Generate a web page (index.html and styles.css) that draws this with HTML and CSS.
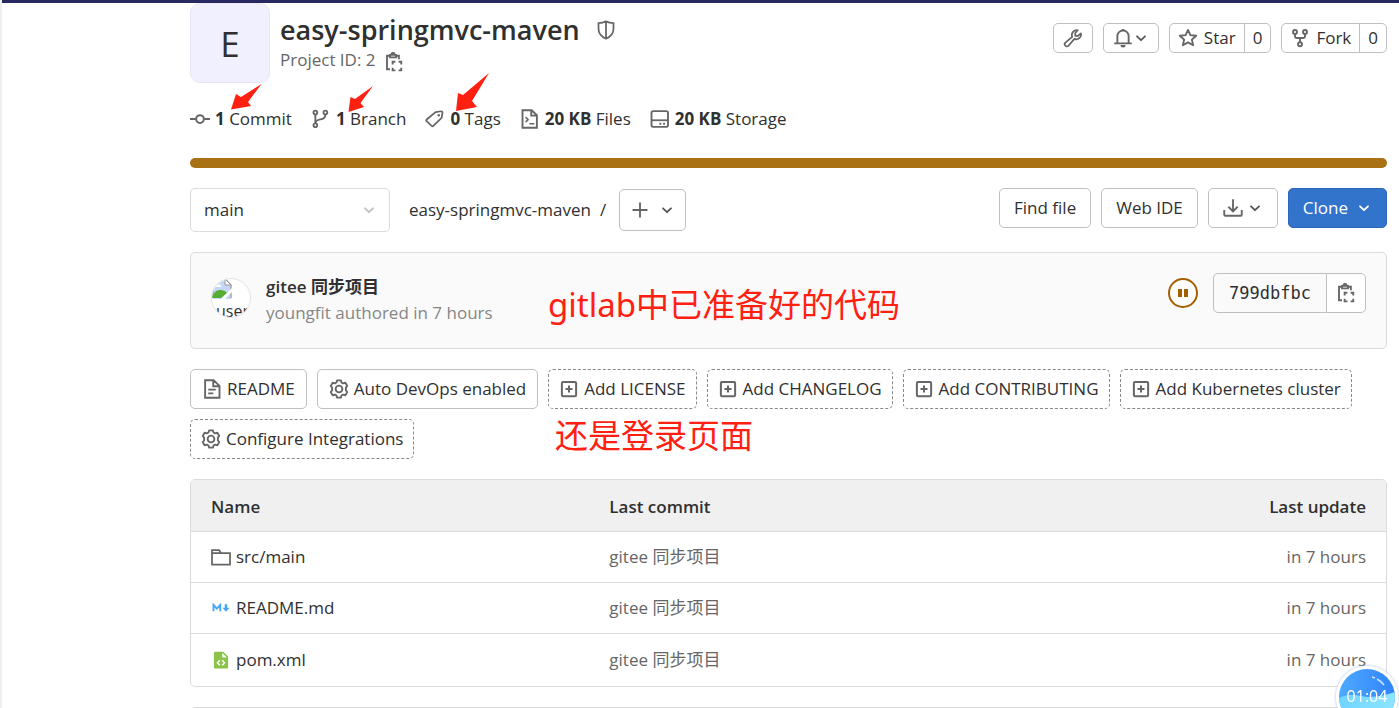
FILE: index.html
```html
<!DOCTYPE html>
<html lang="en">
<head>
<meta charset="utf-8">
<title>easy-springmvc-maven</title>
<link rel="stylesheet" href="styles.css">
</head>
<body>
<svg class="sprite" aria-hidden="true">
  <symbol id="chevron" viewBox="0 0 16 16"><path d="M4 6.3 8 10.2 12 6.3" fill="none" stroke="currentColor" stroke-width="1.8" stroke-linecap="round" stroke-linejoin="round"/></symbol>
  <symbol id="clipboard" viewBox="0 0 16 16"><g fill="none" stroke="currentColor" stroke-width="1.5"><path d="M4.800 3H2.400V13.800H4.800M9.600 3h2.300V5.800M4.800 2.300V4.300h4.800V2.300zM5.900 2a1.300 1.300 0 0 1 2.600 0"/><path d="M6.900 10V7.800H9.100M11.700 7.800h2.100V10M13.800 12.500v2.200h-2.100M9.100 14.700H6.900v-2.200"/></g></symbol>
  <symbol id="plus-square" viewBox="0 0 16 16"><g fill="none" stroke="currentColor" stroke-width="1.6"><rect x="2.300" y="2.300" width="11.400" height="11.400" rx="1"/><path d="M8 5.200v5.600M5.200 8h5.600"/></g></symbol>
  <symbol id="gear" viewBox="0 0 16 16"><g fill="none" stroke="currentColor" stroke-width="1.5" stroke-linejoin="round"><path d="M6.500 1.1h3l.5 1.700 1.300.7 1.800-.5 1.500 2.600-1.100 1.300v2.200l1.100 1.300-1.500 2.600-1.800-.5-1.300.7-.5 1.700h-3L6 13.200l-1.300-.7-1.800.5-1.500-2.600 1.100-1.300V6.900L1.400 5.600 2.900 3l1.800.5L6 2.800z"/><circle cx="8" cy="8" r="2.700"/></g></symbol>
</svg>

<div class="topbar"></div>
<main class="page">
  <header class="project">
    <div class="avatar">E</div>
    <div class="identity">
      <h1>easy-springmvc-maven
        <svg class="icon" viewBox="0 0 16 16"><path d="M8 1.100C10 2.100 12 2.400 14 2.400V7c0 4-2.200 6.300-6 8-3.800-1.700-6-4-6-8V2.400c2 0 4-.3 6-1.300zM8 1.500V15" fill="none" stroke="currentColor" stroke-width="1.400"/></svg>
      </h1>
      <div class="project-id">Project ID: 2
        <button class="plain" aria-label="Copy project ID"><svg class="icon"><use href="#clipboard"/></svg></button>
      </div>
    </div>
    <div class="actions">
      <button class="btn small" aria-label="Admin"><svg class="icon" viewBox="0 0 16 16"><path d="M14.300 4.300a3.800 3.800 0 0 1-5.200 4.400l-4.700 5.500a1.700 1.700 0 0 1-2.500-2.500l5.500-4.600A3.900 3.900 0 0 1 11.800 1.800L9.800 4v2.200H12z" fill="none" stroke="currentColor" stroke-width="1.400" stroke-linejoin="round"/></svg></button>
      <button class="btn small bell" aria-label="Notifications"><svg class="icon" viewBox="0 0 16 16"><path d="M3.500 12V6.500a4.500 4.500 0 0 1 9 0V12M1 12.300h14" fill="none" stroke="currentColor" stroke-width="1.500"/><path d="M6 13.500h4a2 2 0 0 1-4 0zM7 2V.8h2V2z" fill="currentColor"/></svg><svg class="chev"><use href="#chevron"/></svg></button>
      <div class="group"><button class="btn small"><svg class="icon" viewBox="0 0 16 16"><path d="M8 1.500l1.900 4.200 4.600.5-3.400 3.100 1 4.500L8 11.500l-4.100 2.300 1-4.500L1.500 6.200l4.600-.5z" fill="none" stroke="currentColor" stroke-width="1.500" stroke-linejoin="round"/></svg>Star</button><a class="btn small count" href="#">0</a></div>
      <div class="group"><button class="btn small"><svg class="icon" viewBox="0 0 16 16"><g fill="none" stroke="currentColor" stroke-width="1.500"><circle cx="4" cy="3.200" r="1.600"/><circle cx="12" cy="3.200" r="1.600"/><circle cx="8" cy="13" r="1.600"/><path d="M4 5v1.300q0 1.700 1.700 1.700h4.600q1.700 0 1.700-1.700V5M8 8v3.300"/></g></svg>Fork</button><a class="btn small count" href="#">0</a></div>
    </div>
  </header>

  <nav class="stats">
    <a href="#"><svg class="icon" viewBox="0 0 16 16"><path d="M0 8h4.500M11.500 8H16" stroke="currentColor" stroke-width="1.600"/><circle cx="8" cy="8" r="3.100" fill="none" stroke="currentColor" stroke-width="1.600"/></svg><span><b>1</b> Commit</span></a>
    <a href="#"><svg class="icon" viewBox="0 0 16 16"><g fill="none" stroke="currentColor" stroke-width="1.500"><circle cx="3.500" cy="2.800" r="1.500"/><circle cx="3.500" cy="13" r="1.500"/><circle cx="11.500" cy="2.800" r="1.500"/><path d="M3.500 4.500v7M11.500 4.500c0 3-2 3.500-4 3.800S3.500 9.500 3.500 11.500"/></g></svg><span><b>1</b> Branch</span></a>
    <a href="#"><svg class="icon" viewBox="0 0 16 16"><path d="M8.500 2.500 13 1.800q1 0 1 1L13.300 7 6.700 13.500q-.7.6-1.400 0L1.300 9.800q-.6-.7 0-1.400z" fill="none" stroke="currentColor" stroke-width="1.400"/><circle cx="11" cy="4.900" r="1" fill="currentColor"/></svg><span><b>0</b> Tags</span></a>
    <a href="#"><svg class="icon" viewBox="0 0 16 16"><g fill="none" stroke="currentColor" stroke-width="1.500"><path d="M2 1h7.300L13.500 5v10H2zM9 1v4.300h4.500"/><path d="M4.500 6.500 6.500 8.500 4.500 10.500M7.500 11.700h4" stroke-width="1.200"/></g></svg><span><b>20 KB</b> Files</span></a>
    <a href="#"><svg class="icon" viewBox="0 0 16 16"><rect x="1.200" y="1.700" width="13.200" height="12.600" rx="1.500" fill="none" stroke="currentColor" stroke-width="1.500"/><path d="M1 9h13.500" stroke="currentColor" stroke-width="1.400"/><path d="M7.500 11H9v1.500H7.500zM10.500 11H12v1.500h-1.500z" fill="currentColor"/></svg><span><b>20 KB</b> Storage</span></a>
  </nav>

  <div class="languages"></div>

  <div class="toolbar">
    <div class="ref"><select aria-label="Branch"><option>main</option></select><svg class="chev"><use href="#chevron"/></svg></div>
    <div class="crumbs"><a href="#">easy-springmvc-maven</a><span>/</span></div>
    <button class="btn add" aria-label="Add to tree"><svg class="icon" viewBox="0 0 16 16"><path d="M8 2v12M2 8h12" stroke="currentColor" stroke-width="1.500"/></svg><svg class="chev"><use href="#chevron"/></svg></button>
    <div class="right">
      <button class="btn">Find file</button>
      <button class="btn">Web IDE</button>
      <button class="btn download" aria-label="Download"><svg class="icon" viewBox="0 0 16 16"><path d="M8 1v9.500M4.300 7 8 10.700 11.700 7M1 9.500v3.800q0 .9.900.9h12.200q.9 0 .9-.9V9.500" fill="none" stroke="currentColor" stroke-width="1.500"/></svg><svg class="chev"><use href="#chevron"/></svg></button>
      <button class="btn primary">Clone<svg class="chev"><use href="#chevron"/></svg></button>
    </div>
  </div>

  <section class="commit">
    <div class="user">
      <svg viewBox="0 0 20 20" width="20" height="20"><path d="M1 0h12l6 6v14H1z" fill="#c5d7f8"/><path d="M1 18V0h12l6 6v13" fill="none" stroke="#a5a5a5" stroke-width="1.500"/><path d="M13 0v6h6z" fill="#fff" stroke="#999"/><path d="M3 8q0-3 3-2 2-2 3 1l1 1z" fill="#fff"/><path d="M0 19q2-8 8-8 5 0 7 3l-6 5z" fill="#56ad2f"/><path d="M9 20 20 9v4l-7 7z" fill="#fff"/></svg>
      <span>user</span>
    </div>
    <div class="message"><a href="#">gitee 同步项目</a><p>youngfit authored in 7 hours</p></div>
    <div class="right">
      <svg class="pause" viewBox="0 0 30 30" role="img" aria-label="Pending"><circle cx="15" cy="15" r="14" fill="#fff" stroke="#a35f00" stroke-width="2"/><path d="M10 11h4v8h-4zM16 11h4v8h-4z" fill="#a35f00"/></svg>
      <div class="group"><span class="btn sha">799dbfbc</span><button class="btn copy" aria-label="Copy commit SHA"><svg class="icon"><use href="#clipboard"/></svg></button></div>
    </div>
    <p class="note note-code">gitlab中已准备好的代码</p>
  </section>

  <div class="links">
    <a class="btn" href="#"><svg class="icon" viewBox="0 0 16 16"><g fill="none" stroke="currentColor" stroke-width="1.500"><path d="M2.500 1h6.800L14 5.500V15H2.500zM9 1v4.800h5M5 8.500h6M5 11.500h4"/></g></svg>README</a>
    <a class="btn" href="#"><svg class="icon"><use href="#gear"/></svg>Auto DevOps enabled</a>
    <a class="btn dashed" href="#"><svg class="icon"><use href="#plus-square"/></svg>Add LICENSE</a>
    <a class="btn dashed" href="#"><svg class="icon"><use href="#plus-square"/></svg>Add CHANGELOG</a>
    <a class="btn dashed" href="#"><svg class="icon"><use href="#plus-square"/></svg>Add CONTRIBUTING</a>
    <a class="btn dashed" href="#"><svg class="icon"><use href="#plus-square"/></svg>Add Kubernetes cluster</a>
    <a class="btn dashed" href="#"><svg class="icon"><use href="#gear"/></svg>Configure Integrations</a>
    <p class="note note-page">还是登录页面</p>
  </div>

  <div class="files">
    <table>
      <thead><tr><th>Name</th><th>Last commit</th><th>Last update</th></tr></thead>
      <tbody>
        <tr><td><a href="#"><svg class="icon" viewBox="0 0 16 16"><path d="M.8 14V2.400h5.700l1.500 2.400h7.200V14zM.8 4.800H8" fill="none" stroke="currentColor" stroke-width="1.400"/></svg>src/main</a></td><td>gitee 同步项目</td><td>in 7 hours</td></tr>
        <tr><td><a href="#"><svg class="icon" viewBox="0 0 16 16"><path d="M2 10.500v-5L4.700 8.500 7.400 5.500v5" fill="none" stroke="#42a5f5" stroke-width="1.500"/><path d="M11 5h2v2.700h1.800L12 11 9.200 7.700H11z" fill="#42a5f5"/></svg>README.md</a></td><td>gitee 同步项目</td><td>in 7 hours</td></tr>
        <tr><td><a href="#"><svg class="icon" viewBox="0 0 16 16"><path d="M3.300 1.300h6.500L13.700 5.200v8.500q0 1-1 1H3.300q-1 0-1-1V2.300q0-1 1-1z" fill="#8bc34a"/><path d="M9 2.300v3.700h3.700z" fill="#fff"/><path d="M7 8.200 5.200 10.200 7 12.200M9 8.200l1.800 2L9 12.200" fill="none" stroke="#fff" stroke-width="1.200"/></svg>pom.xml</a></td><td>gitee 同步项目</td><td>in 7 hours</td></tr>
      </tbody>
    </table>
  </div>
  <div class="readme"></div>
</main>

<svg class="arrows" viewBox="0 0 300 40" width="300" height="40" aria-hidden="true"><path fill="#ff2012" d="M41.500 12 21 25 16 22 11 37.500 31 34 28 30zM153 14 135 27 130.500 25 128.500 40 144 35 140.500 31zM269 1 243 23 238 21 236 39 257 35 252 29z"/></svg>

<div class="timer">
  <svg viewBox="0 0 56 56"><defs><linearGradient id="sky"><stop offset="0" stop-color="#4eaaff"/><stop offset="1" stop-color="#2f83f8"/></linearGradient><linearGradient id="sea"><stop offset="0" stop-color="#71d4ff"/><stop offset="1" stop-color="#8ce5ff"/></linearGradient></defs><rect width="56" height="56" fill="url(#sky)"/><path d="M0 29q9-5 22-2t34-4v33H0z" fill="url(#sea)"/><path d="M33 8l3 1M38 10q4 2 7 6" stroke="#c9e5ff" stroke-width="1.500" fill="none"/></svg>
  <span>01:04</span>
</div>
</body>
</html>
```
FILE: styles.css
```css
* { box-sizing: border-box; }
body {
  margin: 0;
  height: 100vh;
  overflow: hidden;
  border-left: 2px solid #f0f0f0;
  background: #fff;
  color: #303030;
  font: 17px/24px "Open Sans", "Noto Sans", "Noto Sans CJK SC", sans-serif;
}
a { color: inherit; text-decoration: none; }
p, h1 { margin: 0; }
.sprite { display: none; }
.topbar { height: 3px; margin-left: -2px; background: #292961; }
.page { padding: 0 12px 0 188px; }
.icon { width: 20px; height: 20px; flex: none; color: #666; }
.chev { width: 16px; height: 16px; flex: none; color: #555; }
.right { display: flex; align-items: center; gap: 10px; margin-left: auto; }

.btn {
  display: inline-flex;
  align-items: center;
  gap: 8px;
  height: 40px;
  padding: 0 14px;
  border: 1px solid #bfbfbf;
  border-radius: 5px;
  background: #fff;
  color: #303030;
  font: inherit;
  white-space: nowrap;
}
.small { height: 30px; padding: 0 9px; gap: 6px; }
.group { display: flex; }
.group .btn:first-child { border-radius: 5px 0 0 5px; }
.group .btn:last-child { border-radius: 0 5px 5px 0; margin-left: -1px; }
.primary, .primary .chev { background: #3273cc; color: #fff; }
.primary { border-color: #2b66bb; }

.project { display: flex; gap: 10px; height: 80px; }
.avatar {
  width: 80px;
  height: 80px;
  border: 1px solid #e8e6f4;
  border-radius: 10px;
  background: #f1f0fe;
  font-size: 35px;
  line-height: 80px;
  text-align: center;
}
h1 { display: flex; align-items: center; gap: 16px; padding-top: 9px; font-size: 27px; line-height: 36px; font-weight: 600; }
.project-id { display: flex; align-items: center; gap: 8px; color: #666; }
.plain { display: flex; padding: 0; border: 0; background: none; }
.project-id .icon { margin-top: 4px; }
.actions { display: flex; gap: 10px; margin: 20px 0 0 auto; }
.actions .bell { gap: 0; }
.actions .group .btn { padding: 0 8px; }

.stats { display: flex; gap: 19px; height: 71px; margin-bottom: 4px; align-items: center; }
.stats a { display: flex; align-items: center; gap: 5px; }
.languages { height: 10px; border-radius: 5px; background: #aa7014; }

.toolbar { display: flex; align-items: center; margin: 20px 0; height: 44px; }
.ref { position: relative; width: 200px; }
.ref select {
  width: 100%;
  height: 44px;
  padding: 0 13px;
  border: 1px solid #dbdbdb;
  border-radius: 5px;
  background: #fff;
  color: #303030;
  font: inherit;
  appearance: none;
}
.ref .chev { position: absolute; right: 13px; top: 14px; color: #bfbfbf; }
.crumbs { display: flex; gap: 9px; margin: 0 13px 0 19px; }
.add { height: 42px; padding: 0 10px; }
.toolbar .add { gap: 9px; }
.toolbar .download { gap: 4px; }
.toolbar .right { padding-bottom: 4px; }

.commit {
  position: relative;
  display: flex;
  align-items: center;
  gap: 15px;
  height: 97px;
  padding: 0 20px;
  border: 1px solid #dbdbdb;
  border-radius: 5px;
  background: #fafafa;
}
.user {
  width: 40px;
  height: 40px;
  margin-bottom: 5px;
  overflow: hidden;
  border: 1px solid #e3e3e3;
  border-radius: 50%;
  background: #fff;
}
.user svg { display: block; }
.user span { display: block; padding-left: 4px; line-height: 24px; font-size: 16px; }
.message { line-height: 26px; padding-bottom: 2px; }
.message a { font-weight: 600; }
.message p { color: #868686; }
.commit .right { gap: 15px; padding-bottom: 16px; }
.pause { width: 30px; height: 30px; }
.sha { padding: 0 15px; background: #fafafa; font-family: "DejaVu Sans Mono", monospace; }
.copy { padding: 0 9px; }
.note { position: absolute; color: #ff2012; white-space: nowrap; font-size: 33px; line-height: 44px; font-family: "Noto Sans", "Noto Sans CJK SC", sans-serif; }
.note-code { left: 357px; top: 30px; }
.note-page { left: 365px; top: 45px; }

.links { position: relative; display: flex; flex-wrap: wrap; gap: 10px; margin: 20px 0; }
.links .btn { padding: 0 11px; gap: 5px; }
.links .dashed { padding: 0 10px; border: 1px dashed #888; }

.files { border: 1px solid #dbdbdb; border-radius: 5px; overflow: hidden; }
table { width: 100%; border-collapse: collapse; table-layout: fixed; }
th { height: 51px; padding: 3px 20px 0; background: #f0f0f0; text-align: left; font-weight: 600; }
td { height: 51px; padding: 1px 20px 0; border-top: 1px solid #dbdbdb; color: #666; }
tr:last-child td { height: 53px; }
th:last-child, td:last-child { text-align: right; }
td a { display: flex; align-items: center; gap: 5px; color: #303030; }
.readme { height: 60px; margin-top: 20px; border: 1px solid #dbdbdb; border-radius: 5px; }

.arrows { position: absolute; left: 220px; top: 72px; }
.timer {
  position: fixed;
  right: 1px;
  bottom: -20px;
  width: 62px;
  height: 62px;
  border: 3px solid #fff;
  border-radius: 50%;
  overflow: hidden;
  box-shadow: 0 0 3px #9bbce0;
}
.timer svg { display: block; }
.timer span { position: absolute; inset: 0; color: #fff; font-size: 16px; line-height: 54px; text-align: center; }
```
